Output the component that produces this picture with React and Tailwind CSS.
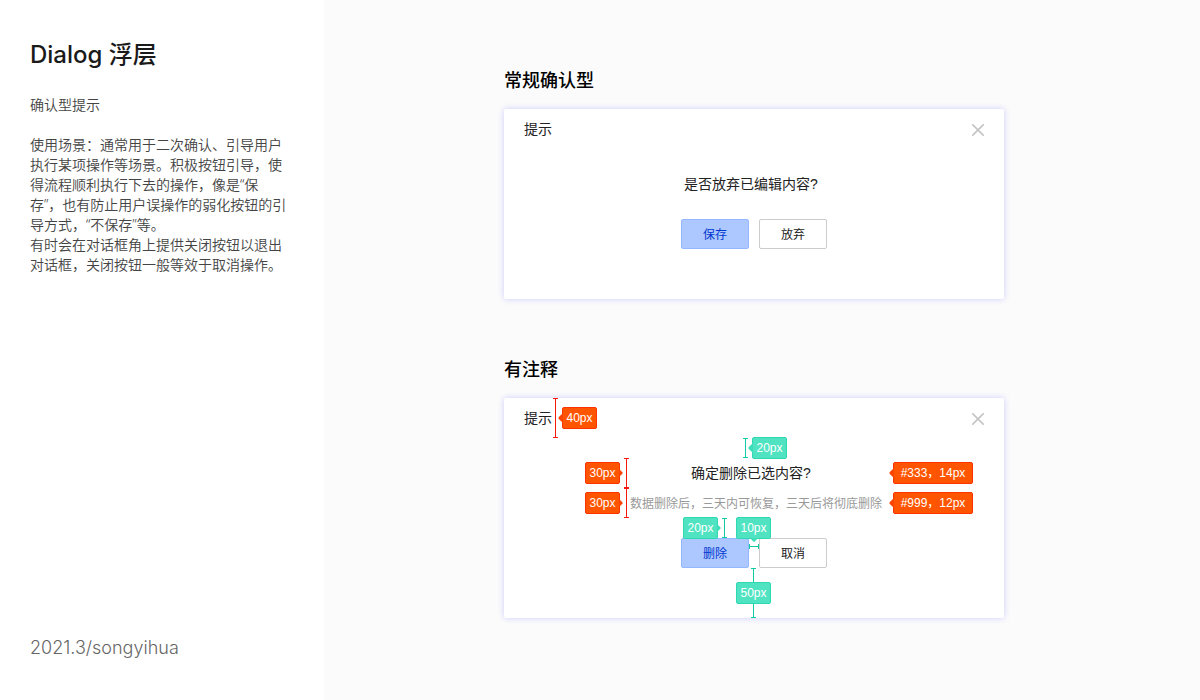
// Dialog spec page: confirm dialogs, with and without size annotations

const TAG_COLORS = {
  orange: 'border-[#ff3300] bg-[#ff5500]',
  teal: 'border-[#2ed8b0] bg-[#50e3c2]',
};

const ARROW_COLORS = {
  orange: 'fill-[#ff4400]',
  teal: 'fill-[#3eddb9]',
};

const LINE_COLORS = {
  red: 'border-[#f5190a]',
  teal: 'border-[#10cba4]',
};

const ARROWS = {
  left: { className: 'right-full inset-y-0 my-auto h-[10px] w-[5px]', path: 'M5 0 L5 10 L0.8 6 Q0 5 0.8 4 Z' },
  right: { className: 'left-full inset-y-0 my-auto h-2 w-1', path: 'M0 0 L0 8 L3.4 4.8 Q4 4 3.4 3.2 Z' },
  bottom: { className: 'top-full inset-x-0 mx-auto h-1 w-2', path: 'M0 0 L8 0 L4.8 3.4 Q4 4 3.2 3.4 Z' },
};

// --- Colored label with an optional pointer ---
function Tag({ color = 'teal', arrow, wide, children }) {
  const pointer = ARROWS[arrow];
  return (
    <div
      className={`relative col-start-1 row-start-1 flex h-[22px] shrink-0 items-center justify-center whitespace-pre rounded-[2px] border text-xs text-white ${
        wide ? 'w-20' : 'w-[35px]'
      } ${TAG_COLORS[color]}`}
    >
      {children}
      {pointer && (
        <svg className={`absolute ${pointer.className} ${ARROW_COLORS[color]}`}>
          <path d={pointer.path} />
        </svg>
      )}
    </div>
  );
}

// --- Vertical ruler with end caps, as tall as its row ---
function Ruler({ color = 'teal' }) {
  return (
    <div
      className={`col-start-1 row-start-1 flex w-[5px] shrink-0 justify-center self-stretch border-y ${LINE_COLORS[color]}`}
    >
      <div className={`border-l ${LINE_COLORS[color]}`}></div>
    </div>
  );
}

// --- One line of centered text, with notes on its left and right ---
function TextRow({ annotated, spec, children }) {
  return (
    <div className="grid h-[30px] grid-cols-[1fr_252px_1fr] items-center">
      <div className="-mr-px flex h-full items-center justify-end gap-1">
        {annotated && (
          <>
            <Tag color="orange" arrow="right">30px</Tag>
            <Ruler color="red" />
          </>
        )}
      </div>
      {children}
      <div className="flex pl-[13px]">
        {annotated && <Tag color="orange" arrow="left" wide>{spec}</Tag>}
      </div>
    </div>
  );
}

function Dialog({ title, message, note, primary, secondary, annotated }) {
  return (
    <div
      role="dialog"
      aria-label={message}
      className="rounded-[2px] bg-white shadow-[0_0_6px_rgba(40,30,255,0.22)]"
    >
      {/* Header */}
      <div className="flex h-10 items-center px-5">
        <h3 className="text-sm text-[#222]">{title}</h3>
        {annotated && (
          <div className="ml-px flex h-full items-center gap-1">
            <Ruler color="red" />
            <Tag color="orange" arrow="left">40px</Tag>
          </div>
        )}
        <button type="button" aria-label="关闭" className="ml-auto mt-0.5">
          <svg className="h-3 w-3 stroke-[#c4c4c4]" viewBox="0 0 12 12" fill="none" strokeWidth="1.6">
            <path d="M0.3 0.3 L11.7 11.7 M11.7 0.3 L0.3 11.7" />
          </svg>
        </button>
      </div>

      {/* Gap above the message */}
      <div className="flex h-5 items-center justify-center gap-1 pl-[22px]">
        {annotated && (
          <>
            <Ruler />
            <Tag arrow="left">20px</Tag>
          </>
        )}
      </div>

      <TextRow annotated={annotated} spec="#333，14px">
        <p className="pr-1.5 text-center text-sm text-[#222]">{message}</p>
      </TextRow>
      {note && (
        <TextRow annotated={annotated} spec="#999，12px">
          <p className="ml-0.5 whitespace-nowrap pt-0.5 text-xs text-[#999]">{note}</p>
        </TextRow>
      )}

      {/* Gap above the buttons */}
      <div className="flex h-5 items-center justify-center pr-[54px]">
        {annotated && (
          <>
            <Tag arrow="right">20px</Tag>
            <div className="ml-1 mr-[9px] flex h-full">
              <Ruler />
            </div>
            <Tag arrow="bottom">10px</Tag>
          </>
        )}
      </div>

      <div className="flex justify-center">
        <button
          type="button"
          className="h-[30px] w-[68px] rounded-[2px] border border-[#94b8ff] bg-[#adc7ff] pt-0.5 text-xs text-[#0037d0]"
        >
          {primary}
        </button>
        <div className="w-2.5 pt-1.5">
          {annotated && (
            <div className={`flex h-[5px] items-center border-x ${LINE_COLORS.teal}`}>
              <div className={`flex-1 border-t ${LINE_COLORS.teal}`}></div>
            </div>
          )}
        </div>
        <button
          type="button"
          className="h-[30px] w-[68px] rounded-[2px] border border-[#ccc] bg-white pt-0.5 text-xs text-[#222]"
        >
          {secondary}
        </button>
      </div>

      {/* Bottom padding */}
      <div className="grid h-[50px] place-items-center pr-px">
        {annotated && (
          <>
            <Ruler />
            <Tag>50px</Tag>
          </>
        )}
      </div>
    </div>
  );
}

export default function App() {
  return (
    <div className="flex min-h-screen bg-[#fbfbfb] font-['Liberation_Sans','Noto_Sans_CJK_SC',sans-serif]">
      <aside className="flex w-[324px] shrink-0 flex-col bg-white px-[30px] py-10 font-['Inter','Noto_Sans_CJK_SC',sans-serif]">
        <h1 className="text-2xl font-medium leading-[30px] text-[#1a1a1a]">Dialog 浮层</h1>
        <div className="mt-[25px] w-[260px] font-['Noto_Sans','Noto_Sans_CJK_SC',sans-serif] text-sm font-[350] leading-5 text-[#444]">
          <p>确认型提示</p>
          <p className="mt-5">
            使用场景：通常用于二次确认、引导用户执行某项操作等场景。积极按钮引导，使得流程顺利执行下去的操作，像是“保存”，也有防止用户误操作的弱化按钮的引导方式，“不保存”等。
          </p>
          <p>有时会在对话框角上提供关闭按钮以退出对话框，关闭按钮一般等效于取消操作。</p>
        </div>
        <p className="mt-auto text-lg font-light leading-6 text-[#666]">2021.3/songyihua</p>
      </aside>

      <main className="flex-1 pb-20 pl-[180px] pr-10 pt-[69px]">
        <section className="max-w-[500px]">
          <h2 className="mb-4 text-lg font-medium leading-6 text-black">常规确认型</h2>
          <Dialog title="提示" message="是否放弃已编辑内容?" primary="保存" secondary="放弃" />
        </section>

        <section className="mt-[59px] max-w-[500px]">
          <h2 className="mb-4 text-lg font-medium leading-6 text-black">有注释</h2>
          <Dialog
            title="提示"
            message="确定删除已选内容?"
            note="数据删除后，三天内可恢复，三天后将彻底删除"
            primary="删除"
            secondary="取消"
            annotated
          />
        </section>
      </main>
    </div>
  );
}
